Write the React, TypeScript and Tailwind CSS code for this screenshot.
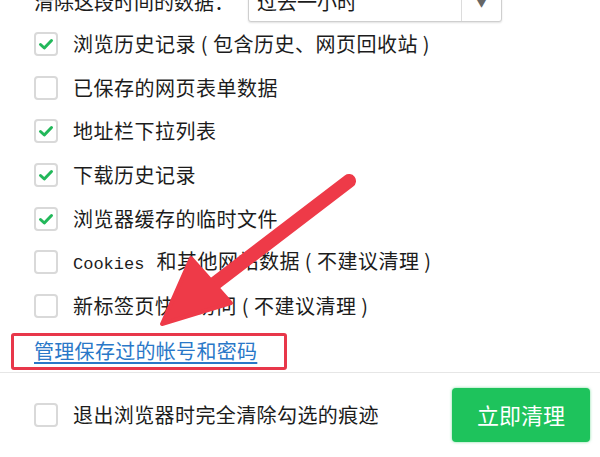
import React from "react";

type Item = { label: string; mono?: string; checked: boolean };

const items: Item[] = [
  { label: "浏览历史记录（包含历史、网页回收站）", checked: true },
  { label: "已保存的网页表单数据", checked: false },
  { label: "地址栏下拉列表", checked: true },
  { label: "下载历史记录", checked: true },
  { label: "浏览器缓存的临时文件", checked: true },
  { mono: "Cookies", label: "和其他网站数据（不建议清理）", checked: false },
  { label: "新标签页快速访问（不建议清理）", checked: false },
];

// full-width brackets get trimmed by the browser, so give them a fixed cell
const withParens = (text: string) =>
  text.split(/([（）])/).map((part, i) =>
    part === "（" || part === "）" ? (
      <span key={i} className="inline-block w-[17px] text-center">
        {part === "（" ? "(" : ")"}
      </span>
    ) : (
      <React.Fragment key={i}>{part}</React.Fragment>
    )
  );

const Checkbox = ({ checked }: { checked: boolean }) => (
  <span className="flex h-[24px] w-[24px] shrink-0 items-center justify-center rounded-[4px] border-2 border-[#d9d9d9] bg-white">
    {checked && (
      <svg width="16" height="16" viewBox="0 0 16 16">
        <path
          d="M2.5 8.5 L6.3 12 L13.5 4.5"
          fill="none"
          stroke="#22b85a"
          strokeWidth="3"
          strokeLinecap="round"
          strokeLinejoin="round"
        />
      </svg>
    )}
  </span>
);

const Row = ({ item }: { item: Item }) => (
  <div className="flex h-[43.7px] items-center pl-[34px]">
    <Checkbox checked={item.checked} />
    <span className="ml-[15px] text-[20px] leading-none tracking-[0.5px] text-[#1c1c1c]">
      {item.mono && (
        <span className="mr-[12px] font-['Liberation_Mono',monospace] text-[17px] tracking-normal">{item.mono}</span>
      )}
      {withParens(item.label)}
    </span>
  </div>
);

export default function App() {
  return (
    <div className="relative h-[457px] w-[600px] overflow-hidden bg-white font-['Noto_Sans_CJK_SC','Noto_Sans',sans-serif]">
      {/* time range */}
      <div className="-mt-[18px] flex h-[40px] items-center pl-[34px]">
        <span className="text-[20px] text-[#1c1c1c]">清除这段时间的数据：</span>
        <div className="ml-[14px] flex h-[40px] w-[254px] items-center rounded-[3px] border border-[#cfcfcf] bg-white shadow-[0_1px_2px_rgba(0,0,0,0.12)]">
          <span className="flex-1 pl-[8px] text-[20px] text-[#1c1c1c]">过去一小时</span>
          <span className="flex h-full w-[40px] items-center justify-center border-l border-[#dcdcdc] text-[12px] text-[#666]">
            ▼
          </span>
        </div>
      </div>

      {items.map((item, i) => (
        <Row key={i} item={item} />
      ))}

      <div className="ml-[11px] mt-[5px] flex h-[37px] w-[276px] items-center rounded-[3px] border-[3px] border-[#e8374a] pl-[20px]">
        <a href="#" className="text-[20px] leading-none tracking-[0.3px] text-[#2a78c8] underline underline-offset-[3px]">
          管理保存过的帐号和密码
        </a>
      </div>

      <div className="mt-[2px] border-t border-[#e6e6e6]" />

      <div className="flex h-[84px] items-center justify-between pl-[34px] pr-[10px]">
        <div className="flex items-center">
          <Checkbox checked={false} />
          <span className="ml-[15px] text-[20px] leading-none tracking-[0.4px] text-[#1c1c1c]">
            退出浏览器时完全清除勾选的痕迹
          </span>
        </div>
        <button className="flex h-[54px] w-[138px] items-center justify-center rounded-[4px] bg-[#1ec35c] text-[22px] text-white shadow-[0_0_3px_rgba(30,195,92,0.6)]">
          立即清理
        </button>
      </div>

      {/* annotation arrow */}
      <svg className="pointer-events-none absolute left-0 top-0" width="600" height="457">
        <line x1="349" y1="181" x2="205" y2="291" stroke="#ee3a48" strokeWidth="14" strokeLinecap="round" />
        <polygon
          points="162,324 191,258 231,303"
          fill="#ee3a48"
          stroke="#ee3a48"
          strokeWidth="4"
          strokeLinejoin="round"
        />
      </svg>
    </div>
  );
}
